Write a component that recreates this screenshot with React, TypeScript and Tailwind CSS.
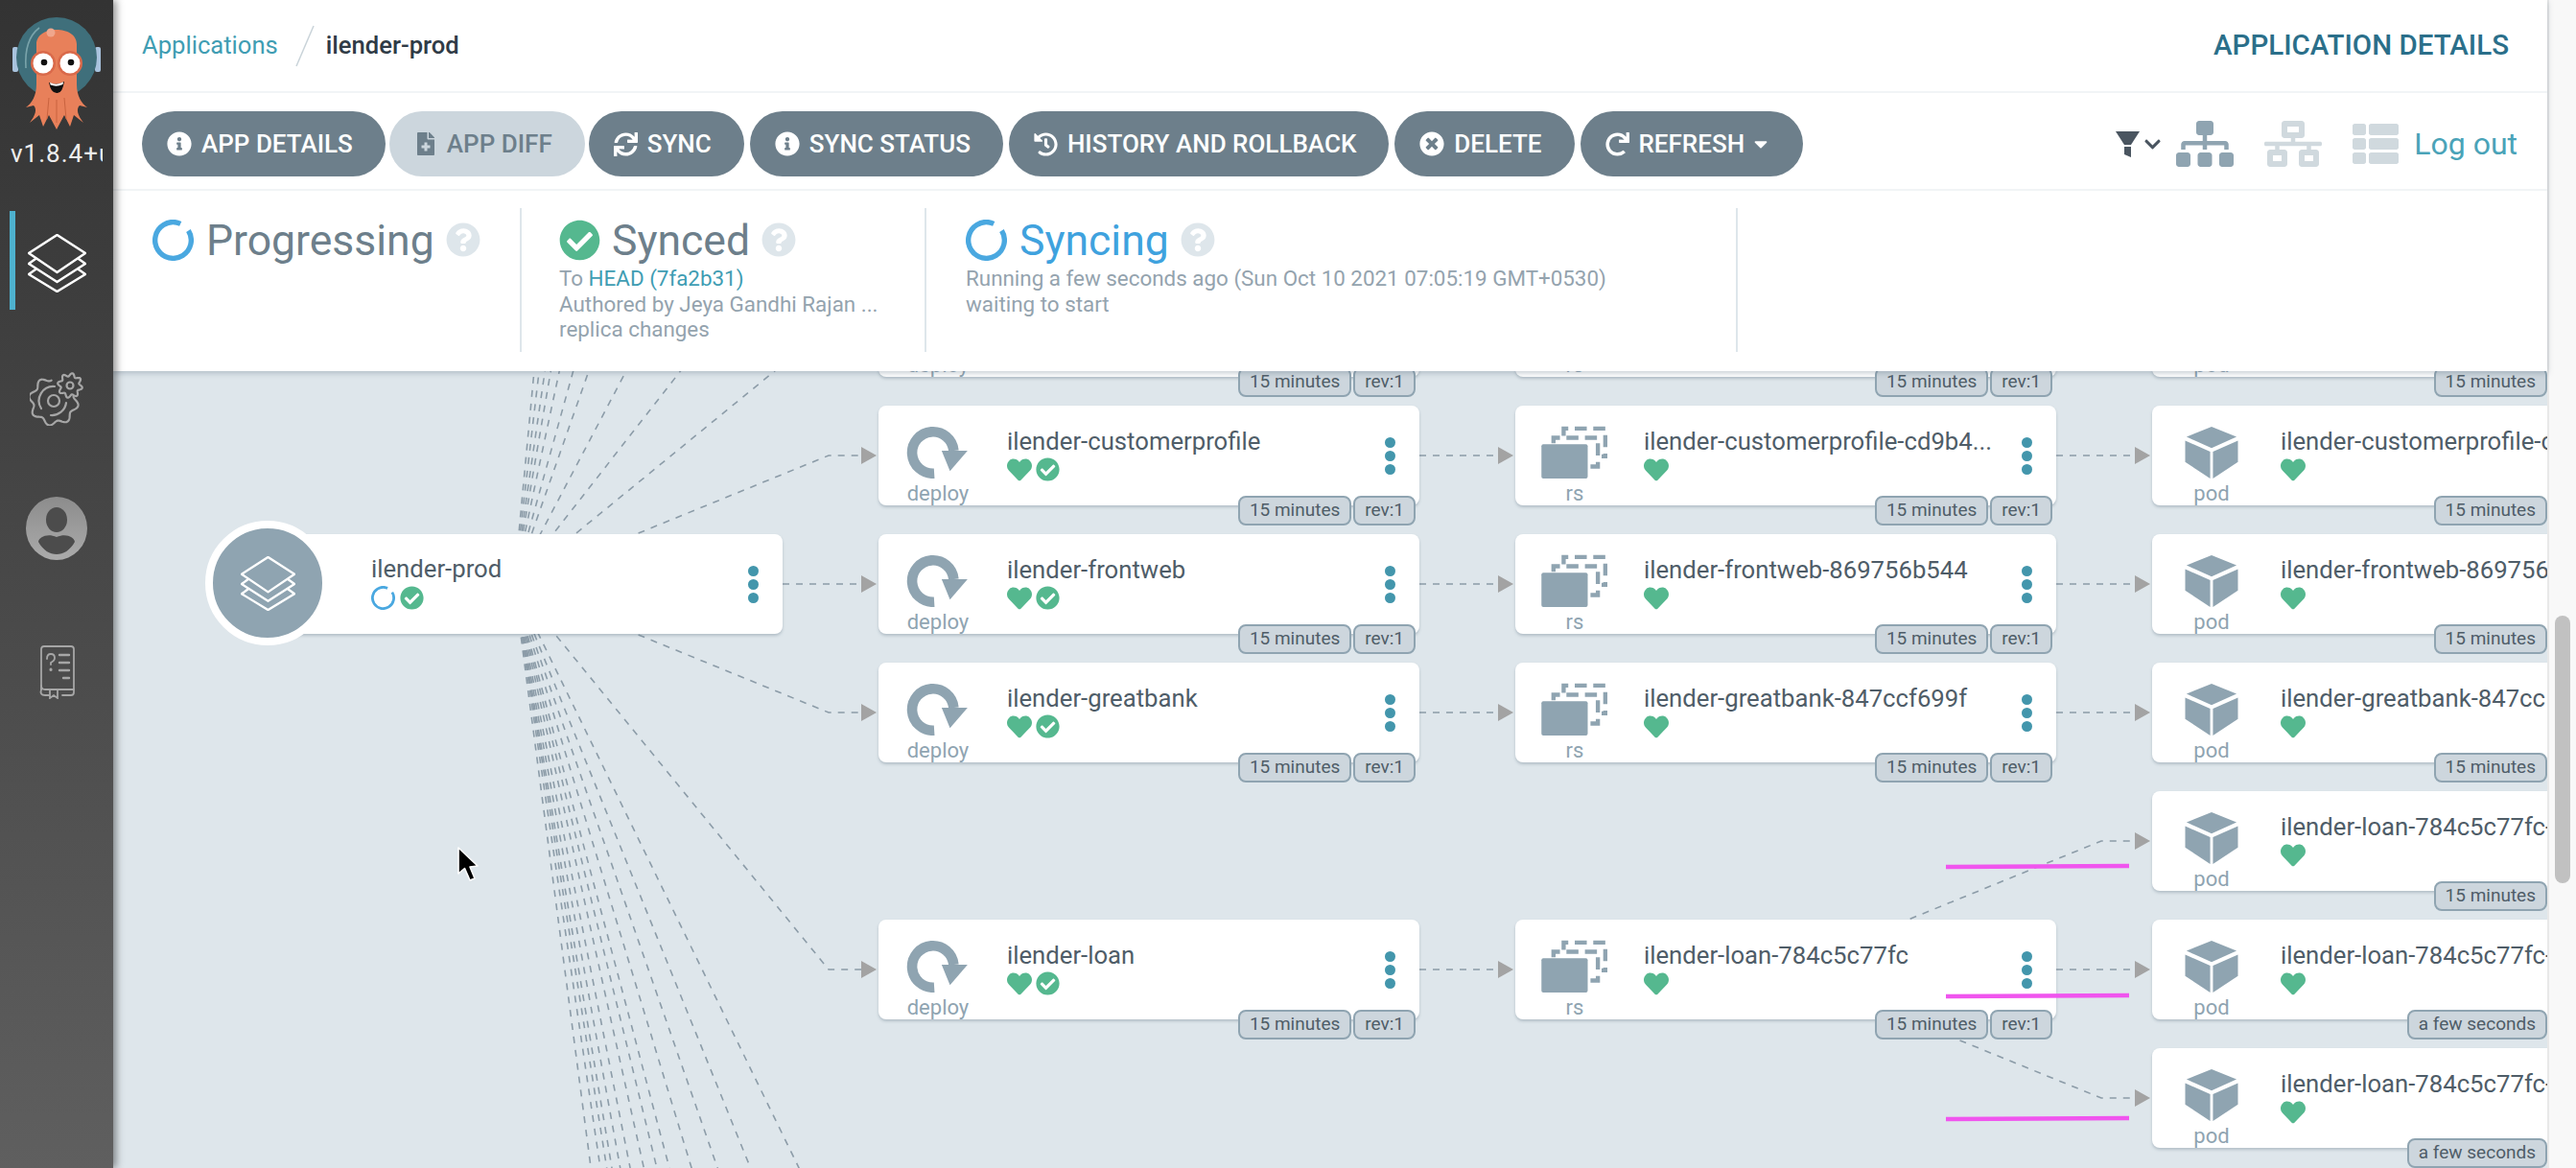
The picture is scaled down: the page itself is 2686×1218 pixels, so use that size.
import React from 'react';
import { FaInfoCircle, FaFileMedical, FaSync, FaHistory, FaTimesCircle, FaRedo, FaCaretDown, FaCheckCircle, FaHeart, FaQuestionCircle, FaChevronDown, FaSitemap, FaNetworkWired, FaThList } from 'react-icons/fa';

const OX = 118;
const OY = 387;

function Spinner({ size, width }: { size: number; width: number }) {
  const r = 20 - width / 2;
  const c = 2 * Math.PI * r;
  return (
    <svg width={size} height={size} viewBox="0 0 40 40" className="shrink-0">
      <circle cx="20" cy="20" r={r} fill="none" stroke="#4aa8e0" strokeWidth={width} strokeDasharray={`${c * 0.9} ${c * 0.1}`} transform="rotate(-32 20 20)" />
    </svg>
  );
}

function Layers({ className }: { className: string }) {
  return (
    <svg viewBox="0 0 61 61" className={className} fill="none" stroke="#fff" strokeWidth="2.5" strokeLinejoin="round" strokeLinecap="round">
      <path d="M30.5 1 L60 20 L30.5 40 L1 20 Z" />
      <path d="M8 26 L1 31 L30.5 50 L60 31 L53 26" />
      <path d="M8 37 L1 42 L30.5 60 L60 42 L53 37" />
    </svg>
  );
}

function gear(cx: number, cy: number, r0: number, r1: number, teeth: number, from: number, to: number) {
  const pts: string[] = [];
  const steps = 160;
  for (let i = 0; i <= steps; i++) {
    const a = from + ((to - from) * i) / steps;
    const r = (r0 + r1) / 2 + ((r1 - r0) / 2) * Math.sin(a * teeth);
    pts.push(`${(cx + r * Math.cos(a)).toFixed(2)} ${(cy + r * Math.sin(a)).toFixed(2)}`);
  }
  return 'M' + pts.join(' L');
}

function Settings() {
  return (
    <svg viewBox="0 0 56 56" className="h-[56px] w-[56px]" fill="none" stroke="#a6a6a6" strokeWidth="2.2" strokeLinecap="round">
      <path d={gear(25, 30, 21, 26, 8, -0.2, 4.6)} />
      <path d="M12 38 A15 15 0 0 1 26 15" />
      <path d="M38 32 A15 15 0 0 1 22 45" />
      <circle cx="25" cy="30" r="6" />
      <path d={gear(42, 14, 9.5, 13, 8, 0, 6.283)} />
      <circle cx="42" cy="14" r="3.5" />
    </svg>
  );
}

function User() {
  return (
    <svg viewBox="0 0 64 66" className="h-[66px] w-[64px]">
      <defs>
        <linearGradient id="userGrad" x1="0" y1="0" x2="0" y2="1">
          <stop offset="0" stopColor="#8c8c8c" />
          <stop offset="1" stopColor="#ababab" />
        </linearGradient>
      </defs>
      <ellipse cx="32" cy="33" rx="32" ry="33" fill="url(#userGrad)" />
      <ellipse cx="32" cy="24" rx="11" ry="13" fill="#4c4c4c" />
      <path d="M32 42 C22 38 14 42 13 47 C18 56 25 60 32 60 C39 60 46 56 51 47 C50 42 42 38 32 42 Z" fill="#4c4c4c" />
    </svg>
  );
}

function Docs() {
  return (
    <svg viewBox="0 0 40 56" className="h-[56px] w-[40px]" fill="none" stroke="#a6a6a6" strokeWidth="1.8" strokeLinecap="round">
      <path d="M4 46 V4 Q4 1 7 1 H35 Q38 1 38 4 V49 Q38 52 35 52 H26" />
      <path d="M4 42 Q4 46 8 46 H38" />
      <path d="M4 46 Q2 52 8 52 H12" />
      <path d="M13 46 V55 L17 52 L21 55 V46" />
      <path d="M10 14 Q10 9 14 9 Q18 9 18 13 Q18 16 14 18 V20" />
      <path d="M14 25 V25.5" strokeWidth="3" />
      <path d="M23 10 H33 M23 18 H33 M23 26 H33 M27 34 H33" strokeWidth="2.4" />
    </svg>
  );
}

function Logo() {
  return (
    <svg viewBox="0 0 92 120" className="h-[120px] w-[92px]">
      <rect x="0" y="33" width="6" height="26" rx="2" fill="#a9c3de" />
      <rect x="86" y="33" width="6" height="26" rx="2" fill="#a9c3de" />
      <circle cx="46" cy="44" r="42" fill="#3f6f7b" />
      <path d="M14 55 Q12 25 28 13" fill="none" stroke="#79a3aa" strokeWidth="1.6" />
      <g fill="#e8805a">
        <path d="M25 30 C25 10 67 10 67 30 L67 72 C67 84 72 92 78 96 L70 94 C66 98 68 104 74 112 L64 104 L60 116 L54 104 L46 119 L38 104 L32 116 L28 104 L18 112 C24 104 26 98 22 94 L14 96 C20 92 25 84 25 72 Z" />
      </g>
      <g fill="none" stroke="#c9633f" strokeWidth="1">
        <path d="M38 86 L36 108 M46 88 V112 M54 86 L56 108" />
      </g>
      <circle cx="40" cy="18" r="4.5" fill="#f0a68c" />
      <circle cx="32" cy="50" r="13" fill="#d9694a" />
      <circle cx="60" cy="50" r="13" fill="#d9694a" />
      <circle cx="32" cy="50" r="10.5" fill="#fff" />
      <circle cx="60" cy="50" r="10.5" fill="#fff" />
      <circle cx="33" cy="49" r="3.3" fill="#111" />
      <circle cx="61" cy="49" r="3.3" fill="#111" />
      <path d="M38 70 Q46 74 54 69 Q52 82 46 81 Q40 81 38 70 Z" fill="#111" />
      <path d="M39 70 Q46 73.5 53 69.5 L52.5 72 Q46 75 39.6 72.5 Z" fill="#fff" />
    </svg>
  );
}

function Btn({ icon, label, disabled, caret }: { icon: React.ReactNode; label: string; disabled?: boolean; caret?: boolean }) {
  return (
    <button className={`flex h-[68px] items-center gap-[10px] rounded-[34px] pl-[26px] text-[26px] font-medium whitespace-nowrap ${caret ? 'pr-[33px]' : 'pr-[34px]'} ${disabled ? 'bg-[#ccd6dd] text-[#6d7f8b]' : 'bg-[#6d7f8b] text-white'}`}>
      {icon}
      <span>{label}</span>
      {caret && <FaCaretDown size={22} className="-ml-[4px]" />}
    </button>
  );
}

function Help({ size }: { size: number }) {
  return <FaQuestionCircle size={size} color="#dee6eb" className="shrink-0" />;
}

function Check({ size }: { size: number }) {
  return <FaCheckCircle size={size} color="#55b88f" className="shrink-0" />;
}

function Kebab() {
  return (
    <div className="flex flex-col gap-[3px]">
      <div className="h-[11px] w-[11px] rounded-full bg-[#4396ac]" />
      <div className="h-[11px] w-[11px] rounded-full bg-[#4396ac]" />
      <div className="h-[11px] w-[11px] rounded-full bg-[#4396ac]" />
    </div>
  );
}

function KindIcon({ kind }: { kind: string }) {
  if (kind === 'deploy') {
    return (
      <svg viewBox="0 0 90 57" className="h-[57px] w-[90px]">
        <path d="M41 51.5 A22.5 22.5 0 1 1 62 27" fill="none" stroke="#8fa4b1" strokeWidth="11" />
        <path d="M49 27 H77 L58 49 Z" fill="#8fa4b1" />
      </svg>
    );
  }
  if (kind === 'rs') {
    return (
      <svg viewBox="0 0 90 57" className="h-[57px] w-[90px]">
        <path d="M33 11 V3 H78 V33 H74" fill="none" stroke="#8fa4b1" strokeWidth="4.5" strokeDasharray="13 7" />
        <path d="M22 19 V13 H70 V44 H61" fill="none" stroke="#8fa4b1" strokeWidth="4.5" strokeDasharray="13 7" />
        <rect x="9" y="20" width="50" height="37" rx="2" fill="#8fa4b1" />
      </svg>
    );
  }
  return (
    <svg viewBox="0 0 90 57" className="h-[57px] w-[90px]">
      <path d="M45 1 L72 12 L45 24 L18 12 Z" fill="#8fa4b1" />
      <path d="M16.5 16 L43.5 28 V57 L16.5 39 Z" fill="#8fa4b1" />
      <path d="M73.5 16 L46.5 28 V57 L73.5 39 Z" fill="#8fa4b1" />
    </svg>
  );
}

function Tag({ children }: { children: React.ReactNode }) {
  return (
    <div className="flex h-[31px] items-center rounded-[8px] border-2 border-[#8fa4b1] bg-[#cdd6dd] px-[10px] text-[19px] whitespace-nowrap text-[#4f5d68]">
      {children}
    </div>
  );
}

type N = { kind: string; x: number; y: number; name: string; age: string; rev?: boolean; sync?: boolean };

const DEPLOY_X = 916;
const RS_X = 1580;
const POD_X = 2244;

const nodes: N[] = [
  { kind: 'deploy', x: DEPLOY_X, y: 289, name: '', age: '15 minutes', rev: true, sync: true },
  { kind: 'rs', x: RS_X, y: 289, name: '', age: '15 minutes', rev: true },
  { kind: 'pod', x: POD_X, y: 289, name: '', age: '15 minutes' },
  { kind: 'deploy', x: DEPLOY_X, y: 423, name: 'ilender-customerprofile', age: '15 minutes', rev: true, sync: true },
  { kind: 'rs', x: RS_X, y: 423, name: 'ilender-customerprofile-cd9b4...', age: '15 minutes', rev: true },
  { kind: 'pod', x: POD_X, y: 423, name: 'ilender-customerprofile-c', age: '15 minutes' },
  { kind: 'deploy', x: DEPLOY_X, y: 557, name: 'ilender-frontweb', age: '15 minutes', rev: true, sync: true },
  { kind: 'rs', x: RS_X, y: 557, name: 'ilender-frontweb-869756b544', age: '15 minutes', rev: true },
  { kind: 'pod', x: POD_X, y: 557, name: 'ilender-frontweb-869756', age: '15 minutes' },
  { kind: 'deploy', x: DEPLOY_X, y: 691, name: 'ilender-greatbank', age: '15 minutes', rev: true, sync: true },
  { kind: 'rs', x: RS_X, y: 691, name: 'ilender-greatbank-847ccf699f', age: '15 minutes', rev: true },
  { kind: 'pod', x: POD_X, y: 691, name: 'ilender-greatbank-847cc', age: '15 minutes' },
  { kind: 'pod', x: POD_X, y: 825, name: 'ilender-loan-784c5c77fc-', age: '15 minutes' },
  { kind: 'deploy', x: DEPLOY_X, y: 959, name: 'ilender-loan', age: '15 minutes', rev: true, sync: true },
  { kind: 'rs', x: RS_X, y: 959, name: 'ilender-loan-784c5c77fc', age: '15 minutes', rev: true },
  { kind: 'pod', x: POD_X, y: 959, name: 'ilender-loan-784c5c77fc-', age: 'a few seconds' },
  { kind: 'pod', x: POD_X, y: 1093, name: 'ilender-loan-784c5c77fc-', age: 'a few seconds' },
];

function GraphNode({ n }: { n: N }) {
  const pod = n.kind === 'pod';
  return (
    <div
      className={`absolute flex h-[104px] rounded-[8px] bg-white shadow-[0_2px_3px_rgba(100,120,135,0.35)] ${pod ? 'w-[412px] rounded-r-none' : 'w-[564px]'}`}
      style={{ left: n.x - OX, top: n.y - OY }}
    >
      <div className="ml-[17px] mr-[27px] flex w-[90px] shrink-0 flex-col items-center pt-[21px]">
        <KindIcon kind={n.kind} />
        <div className="mt-[4px] text-[22px] leading-[24px] text-[#8fa4b1]">{n.kind}</div>
      </div>
      <div className="min-w-0 flex-1 overflow-hidden pt-[23px]">
        <div className="h-[28px] text-[25.7px] leading-[28px] whitespace-nowrap text-[#4f5d68]">{n.name}</div>
        <div className="mt-[3px] flex h-[25px] items-center gap-[4px]">
          <FaHeart size={26} color="#55b88f" />
          {n.sync && <Check size={25} />}
        </div>
      </div>
      {!pod && (
        <div className="ml-[10px] mr-[25px] flex items-center">
          <Kebab />
        </div>
      )}
      <div className={`absolute top-[94px] flex gap-[2px] ${pod ? 'right-0' : 'right-[4px]'}`}>
        <Tag>{n.age}</Tag>
        {n.rev && <Tag>rev:1</Tag>}
      </div>
    </div>
  );
}

const LINE = '#8c9ca8';

function Arrow({ x, y }: { x: number; y: number }) {
  return <polygon points={`${x},${y - 9} ${x + 16},${y} ${x},${y + 9}`} fill="#a3a3a3" />;
}

const rootTargets = [341, 475, 743, 1011];
const fanSlopes = [1.28, 1.9, 2.85, 3.6, 4.7, 5.8, 6.9, 8.5, 10.6];
const fanDown = [2.05, 2.47, 2.87, 3.29, 3.76, 4.09, 4.5, 5.03, 5.5, 5.97, 6.3, 6.77, 7.6];

function Edges() {
  return (
    <svg viewBox={`${OX} ${OY} 2538 831`} className="absolute left-0 top-0 h-[831px] w-[2538px]" fill="none" stroke={LINE} strokeWidth="1.6" strokeDasharray="7 7">
      {fanSlopes.map((s) => (
        <line key={`u${s}`} x1="536" y1="609" x2={536 + 328} y2={609 - 328 * s} />
      ))}
      {fanDown.map((s) => (
        <line key={`d${s}`} x1="536" y1="609" x2={536 + 328} y2={609 + 328 * s} />
      ))}
      {rootTargets.map((y) => (
        <g key={y}>
          <polyline points={`536,609 864,${y} 898,${y}`} />
          <g stroke="none">
            <Arrow x={898} y={y} />
          </g>
        </g>
      ))}
      <line x1="816" y1="609" x2="898" y2="609" />
      <g stroke="none">
        <Arrow x={898} y={609} />
      </g>
      {[341, 475, 609, 743, 1011].map((y) => (
        <g key={y}>
          <line x1="1480" y1={y} x2="1562" y2={y} />
          <line x1="2144" y1={y} x2="2226" y2={y} />
          <g stroke="none">
            <Arrow x={1562} y={y} />
            <Arrow x={2226} y={y} />
          </g>
        </g>
      ))}
      <polyline points="1862,1011 2191,877 2226,877" />
      <polyline points="1862,1011 2191,1145 2226,1145" />
      <g stroke="none">
        <Arrow x={2226} y={877} />
        <Arrow x={2226} y={1145} />
      </g>
    </svg>
  );
}

function Overlay() {
  return (
    <svg viewBox={`${OX} ${OY} 2538 831`} className="pointer-events-none absolute left-0 top-0 h-[831px] w-[2538px]">
      <line x1="2029" y1="904" x2="2220" y2="903" stroke="#f055ee" strokeWidth="4.5" />
      <line x1="2029" y1="1039" x2="2220" y2="1038" stroke="#f055ee" strokeWidth="4.5" />
      <line x1="2029" y1="1167" x2="2220" y2="1166" stroke="#f055ee" strokeWidth="4.5" />
      <path d="M478 884 V911 L484.5 905.5 L490 918 L495 916 L490 904 L498 903 Z" fill="#000" stroke="#fff" strokeWidth="1.6" strokeLinejoin="round" />
    </svg>
  );
}

export default function App() {
  return (
    <div className="flex h-screen w-screen overflow-hidden bg-[#f8f8f8] font-['Roboto',sans-serif]">
      <aside className="relative z-20 flex w-[118px] shrink-0 flex-col items-center bg-gradient-to-b from-[#333333] to-[#5f5f5f] shadow-[3px_0_8px_rgba(0,0,0,0.45)]">
        <div className="mt-[16px]">
          <Logo />
        </div>
        <div className="mt-[9px] h-[30px] w-[96px] overflow-hidden text-[26px] leading-[30px] tracking-[1px] whitespace-nowrap text-[#eeeeee]">v1.8.4+u</div>
        <div className="absolute left-[10px] top-[220px] h-[103px] w-[6px] bg-[#4eb1ce]" />
        <div className="mt-[69px]">
          <Layers className="h-[61px] w-[61px]" />
        </div>
        <div className="mt-[83px]">
          <Settings />
        </div>
        <div className="mt-[74px]">
          <User />
        </div>
        <div className="mt-[89px]">
          <Docs />
        </div>
      </aside>

      <main className="flex min-w-0 flex-1 flex-col">
        <div className="relative z-10 bg-white shadow-[0_2px_6px_rgba(90,110,125,0.35)]">
          <div className="flex h-[97px] items-center border-b-2 border-[#f1f4f6] pl-[30px] pr-[40px]">
            <span className="text-[25.6px] text-[#3f9db3]">Applications</span>
            <svg width="20" height="44" viewBox="0 0 20 44" className="ml-[18px] mr-[12px]">
              <line x1="19" y1="1" x2="1" y2="43" stroke="#c9d3d9" strokeWidth="1.5" />
            </svg>
            <span className="text-[25.6px] font-medium text-[#2f3b46]">ilender-prod</span>
            <span className="ml-auto text-[29.5px] font-medium text-[#2b6f8a]">APPLICATION DETAILS</span>
          </div>
          <div className="flex h-[102px] items-center border-b-2 border-[#f1f4f6] pl-[30px] pr-[31px] pt-[6px]">
            <div className="flex items-center gap-[4px]">
              <Btn icon={<FaInfoCircle size={26} />} label="APP DETAILS" />
              <Btn icon={<FaFileMedical size={24} />} label="APP DIFF" disabled />
              <Btn icon={<FaSync size={25} />} label="SYNC" />
            </div>
            <div className="ml-[6px] flex items-center gap-[6px]">
              <Btn icon={<FaInfoCircle size={26} />} label="SYNC STATUS" />
              <Btn icon={<FaHistory size={25} />} label="HISTORY AND ROLLBACK" />
              <Btn icon={<FaTimesCircle size={26} />} label="DELETE" />
              <Btn icon={<FaRedo size={25} />} label="REFRESH" caret />
            </div>
            <div className="ml-auto flex items-center">
              <svg viewBox="0 0 25 27" className="h-[27px] w-[25px]" fill="#4a5560">
                <polygon points="0,0 25,0 16,14 9,14" />
                <polygon points="9,16 16,16 16,27 9,24" />
              </svg>
              <FaChevronDown size={19} color="#4a5560" className="ml-[4px]" />
              <FaSitemap size={60} color="#8fa4b1" className="ml-[15px]" />
              <FaNetworkWired size={60} color="#d0d9de" className="ml-[32px]" />
              <FaThList size={48} color="#d0d9de" className="ml-[32px]" />
              <span className="ml-[16px] text-[32px] text-[#4aa3b8]">Log out</span>
            </div>
          </div>
          <div className="flex h-[188px] items-start pt-[18px]">
            <div className="h-[150px] w-[426px] shrink-0 border-r-2 border-[#dee6eb] pl-[41px]">
              <div className="mt-[11px] flex h-[44px] items-center">
                <Spinner size={43} width={5} />
                <span className="ml-[13px] mt-[2px] text-[44.5px] text-[#6d7f8b]">Progressing</span>
                <span className="ml-[12px]"><Help size={36} /></span>
              </div>
            </div>
            <div className="h-[150px] w-[422px] shrink-0 border-r-2 border-[#dee6eb] pl-[39px]">
              <div className="mt-[11px] flex h-[44px] items-center">
                <Check size={43} />
                <span className="ml-[12px] mt-[2px] text-[44.5px] text-[#6d7f8b]">Synced</span>
                <span className="ml-[12px]"><Help size={36} /></span>
              </div>
              <div className="mt-[5px] text-[22.4px] leading-[26.5px] whitespace-nowrap text-[#94a3ae]">
                <div>To <span className="text-[#3f9db3]">HEAD (7fa2b31)</span></div>
                <div>Authored by Jeya Gandhi Rajan ...</div>
                <div>replica changes</div>
              </div>
            </div>
            <div className="h-[150px] w-[846px] shrink-0 border-r-2 border-[#dee6eb] pl-[41px]">
              <div className="mt-[11px] flex h-[44px] items-center">
                <Spinner size={43} width={5} />
                <span className="ml-[13px] mt-[2px] text-[44.5px] text-[#3fa2de]">Syncing</span>
                <span className="ml-[12px]"><Help size={36} /></span>
              </div>
              <div className="mt-[5px] text-[22.4px] leading-[26.5px] whitespace-nowrap text-[#94a3ae]">
                <div>Running a few seconds ago (Sun Oct 10 2021 07:05:19 GMT+0530)</div>
                <div>waiting to start</div>
              </div>
            </div>
          </div>
        </div>

        <div className="relative min-h-0 flex-1 overflow-hidden bg-[#dee6eb]">
          <Edges />
          {nodes.map((n, i) => (
            <GraphNode key={i} n={n} />
          ))}
          <div className="absolute left-[138px] top-[170px] flex h-[104px] w-[560px] rounded-[8px] bg-white shadow-[0_2px_3px_rgba(100,120,135,0.35)]">
            <div className="min-w-0 flex-1 overflow-hidden pl-[131px] pt-[22px]">
              <div className="h-[28px] text-[25.7px] leading-[28px] text-[#4f5d68]">ilender-prod</div>
              <div className="mt-[4px] flex h-[25px] items-center gap-[5px]">
                <Spinner size={25} width={4.5} />
                <Check size={25} />
              </div>
            </div>
            <div className="mr-[25px] flex items-center">
              <Kebab />
            </div>
          </div>
          <div className="absolute left-[96px] top-[156px] flex h-[130px] w-[130px] items-center justify-center rounded-full border-[8px] border-white bg-[#8fa4b1]">
            <Layers className="h-[57px] w-[57px]" />
          </div>
          <Overlay />
        </div>
      </main>

      <div className="relative w-[30px] shrink-0 border-l-2 border-[#e8e8e8] bg-[#f8f8f8]">
        <div className="absolute left-[6px] top-[642px] h-[279px] w-[16px] rounded-full bg-[#c1c1c1]" />
      </div>
    </div>
  );
}
